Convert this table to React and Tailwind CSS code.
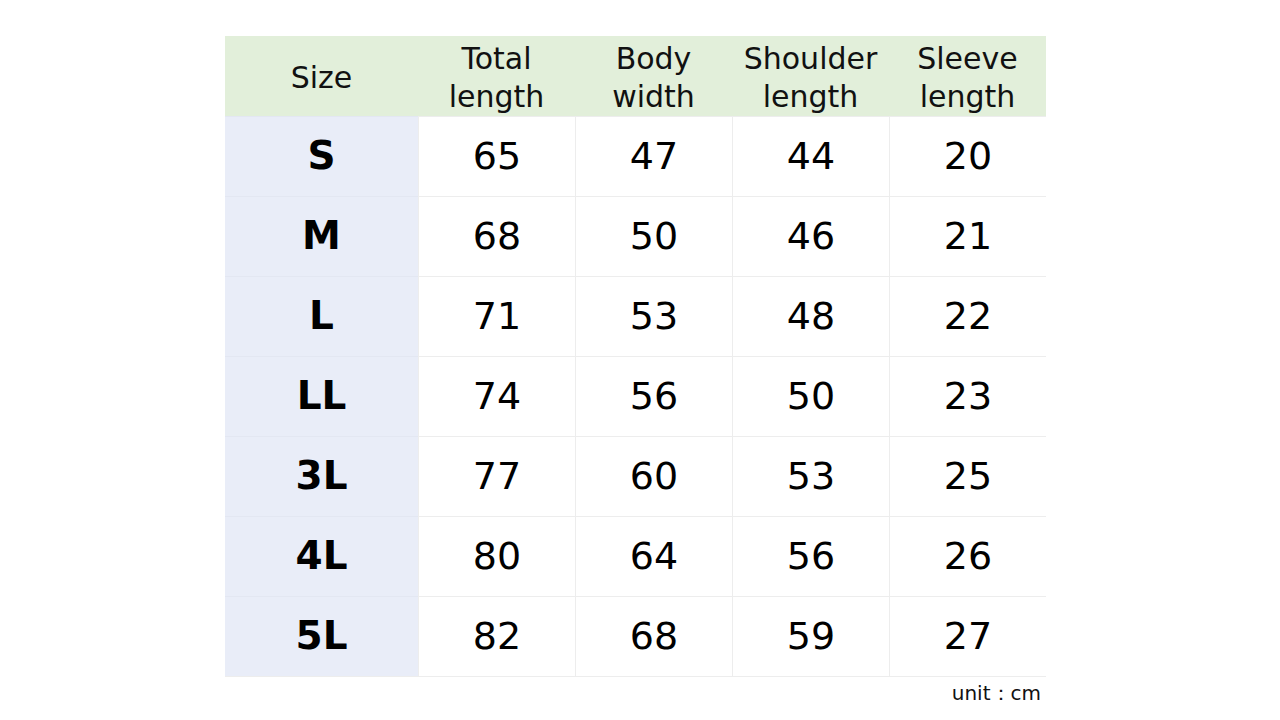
const headers = [
  ["Size"],
  ["Total", "length"],
  ["Body", "width"],
  ["Shoulder", "length"],
  ["Sleeve", "length"],
];

const rows = [
  ["S", 65, 47, 44, 20],
  ["M", 68, 50, 46, 21],
  ["L", 71, 53, 48, 22],
  ["LL", 74, 56, 50, 23],
  ["3L", 77, 60, 53, 25],
  ["4L", 80, 64, 56, 26],
  ["5L", 82, 68, 59, 27],
];

export default function App() {
  return (
    <div
      className="w-[1280px] h-[720px] bg-white text-black"
      style={{ fontFamily: '"DejaVu Sans", Verdana, sans-serif' }}
    >
      <div className="ml-[225px] pt-[36px] w-[821px]">
        <div className="grid grid-cols-[193px_157px_157px_157px_157px] border-r border-b border-[#ededed]">
          {headers.map((h, i) => (
            <div
              key={i}
              className="h-[80px] pt-[3px] bg-[#e2efda] flex flex-col items-center justify-center text-[30px] leading-[38px] text-[#111]"
            >
              {h.map((line) => (
                <span key={line}>{line}</span>
              ))}
            </div>
          ))}
          {rows.map((r) =>
            r.map((v, i) => (
              <div
                key={r[0] + i}
                className={
                  i === 0
                    ? "h-[80px] bg-[#e9edf8] border-t border-[#e3e7f2] flex items-center justify-center text-[39px] font-bold"
                    : "h-[80px] bg-white border-t border-l border-[#ededed] flex items-center justify-center text-[38px]"
                }
              >
                {v}
              </div>
            ))
          )}
        </div>
        <div className="flex justify-end pr-[5px] pt-[2px] text-[20px] leading-[28px] text-[#111]">
          unit：cm
        </div>
      </div>
    </div>
  );
}
